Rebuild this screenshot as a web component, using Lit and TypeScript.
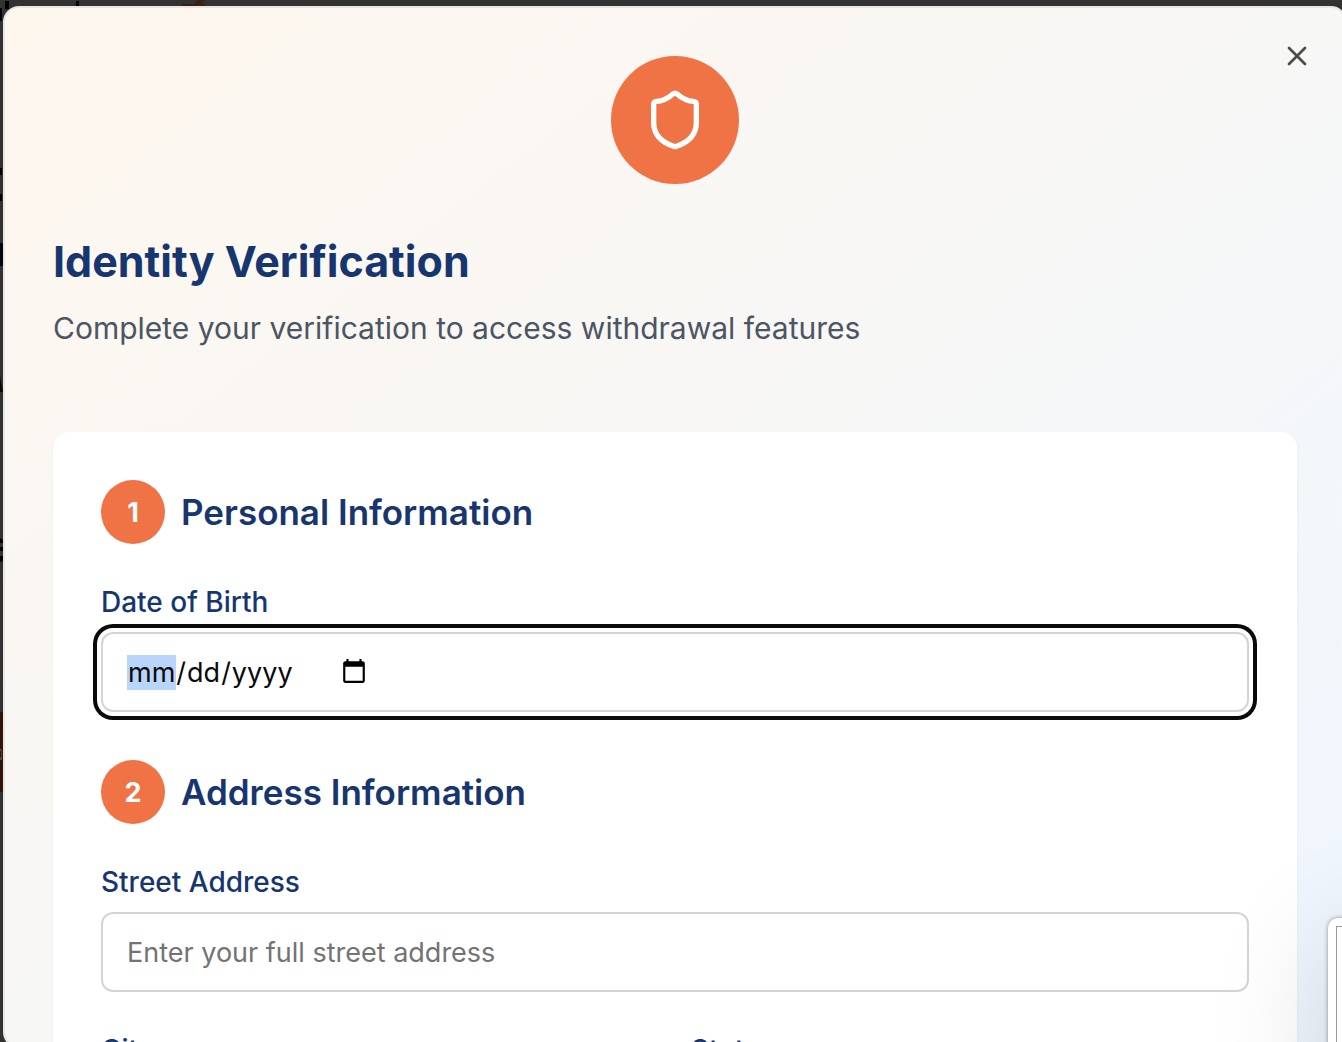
import { LitElement, html, svg, css } from "lit";
import { customElement, property } from "lit/decorators.js";

const shieldIcon = svg`
  <path d="M20 13c0 5-3.5 7.5-7.66 8.95a1 1 0 0 1-.67-.01C7.5 20.5 4 18 4 13V6a1 1 0 0 1 1-1c2 0 4.5-1.2 6.24-2.72a1.17 1.17 0 0 1 1.52 0C14.51 3.81 17 5 19 5a1 1 0 0 1 1 1z"></path>
`;

const closeIcon = svg`<path d="M18 6 6 18"></path><path d="m6 6 12 12"></path>`;

@customElement("step-heading")
export class StepHeading extends LitElement {
  @property({ type: Number }) step = 1;
  @property() heading = "";

  static styles = css`
    :host {
      display: flex;
      align-items: center;
      gap: 16px;
    }
    .badge {
      display: flex;
      flex: none;
      align-items: center;
      justify-content: center;
      width: 64px;
      height: 64px;
      border-radius: 50%;
      background: #f07345;
      color: #fff;
      font-size: 27px;
      font-weight: 700;
    }
    .heading {
      margin: 0;
      color: #17366f;
      font-size: 35px;
      font-weight: 600;
      line-height: 56px;
    }
  `;

  render() {
    return html`
      <span class="badge">${this.step}</span>
      <h3 class="heading">${this.heading}</h3>
    `;
  }
}

@customElement("app-root")
export class AppRoot extends LitElement {
  static styles = css`
    :host {
      display: block;
      position: relative;
      box-sizing: border-box;
      height: 100vh;
      padding: 6px 0 0 3px;
      overflow: hidden;
      background: #323232;
      font-family: Inter, "Liberation Sans", sans-serif;
    }
    .backdrop {
      position: absolute;
      top: 0;
      left: 0;
      width: 210px;
      height: 800px;
    }
    .modal {
      position: relative;
      box-sizing: border-box;
      height: 100vh;
      margin-right: -5px;
      padding: 48px;
      overflow-y: auto;
      scrollbar-width: none;
      border: 2px solid #e9e6e4;
      border-radius: 16px;
      background: linear-gradient(to bottom right, #fff7ed -6%, #f7f7f6 50%, #eff6ff);
    }
    .close {
      position: absolute;
      top: 32px;
      right: 32px;
      width: 32px;
      height: 32px;
      padding: 0;
      border: 0;
      background: none;
      color: #4b4b4b;
      cursor: pointer;
    }
    .icon {
      display: block;
      fill: none;
      stroke: currentColor;
      stroke-width: 2;
      stroke-linecap: round;
      stroke-linejoin: round;
    }
    .emblem {
      display: flex;
      align-items: center;
      justify-content: center;
      width: 128px;
      height: 128px;
      margin: 0 auto 48px;
      border-radius: 50%;
      background: #f07345;
      color: #fff;
    }
    .title {
      margin: 0;
      color: #17366f;
      font-size: 43px;
      font-weight: 700;
      line-height: 58px;
    }
    .subtitle {
      margin: 12px 0 78px;
      color: #4b5563;
      font-size: 30px;
      line-height: 52px;
    }
    .card {
      display: flex;
      flex-direction: column;
      gap: 48px;
      padding: 48px;
      border-radius: 16px;
      background: #fff;
      box-shadow: 0 2px 4px rgba(0, 0, 0, 0.05);
    }
    .section,
    .field {
      display: flex;
      flex-direction: column;
    }
    .section {
      gap: 44px;
    }
    .field {
      gap: 16px;
    }
    .pair {
      display: grid;
      grid-template-columns: 1fr 1fr;
      gap: 32px;
    }
    .label {
      color: #17366f;
      font-size: 28px;
      font-weight: 500;
      line-height: 28px;
    }
    .input {
      display: flex;
      align-items: center;
      box-sizing: border-box;
      width: 100%;
      height: 80px;
      padding: 0 24px;
      border: 2px solid #d1d5db;
      border-radius: 12px;
      outline: none;
      background: #fff;
      color: #0a0a0a;
      font-family: inherit;
      font-size: 27px;
    }
    .input::placeholder {
      color: #737373;
      opacity: 1;
    }
    .input:focus {
      box-shadow: 0 0 0 4px #fff, 0 0 0 8px #0a0a0a;
    }
    .input::-webkit-datetime-edit {
      flex: none;
    }
    .input:focus::-webkit-datetime-edit-month-field {
      background-color: #b9d5fb !important;
      color: #0a0a0a !important;
    }
    .input::-webkit-calendar-picker-indicator {
      width: 28px;
      height: 28px;
      margin-left: 8px;
    }
    .panel {
      position: absolute;
      top: 918px;
      left: 1328px;
      box-sizing: border-box;
      width: 400px;
      height: 400px;
      padding: 8px;
      border-radius: 10px;
      background: #fff;
      box-shadow: 0 0 4px rgba(0, 0, 0, 0.4), 0 20px 120px rgba(0, 0, 0, 0.14);
    }
    .panel-frame {
      height: 100%;
      border: 1px solid #999;
    }
  `;

  firstUpdated() {
    this.renderRoot.querySelector<HTMLInputElement>("#dob")?.focus();
  }

  private field(id: string, label: string, placeholder: string) {
    return html`
      <div class="field">
        <label class="label" for=${id}>${label}</label>
        <input class="input" id=${id} type="text" placeholder=${placeholder} />
      </div>
    `;
  }

  render() {
    return html`
      <svg class="backdrop" viewBox="0 0 210 800" aria-hidden="true">
        <path fill="#000" d="M5 1h4v8H5zM76 1h3v6h-3zM0 8h2v13H0zM0 168h2v7H0zM0 194h2v7H0z"></path>
        <path fill="#04070f" d="M0 243h3v23H0z"></path>
        <path fill="#0b0906" d="M0 376l3 16H0z"></path>
        <path fill="#000" d="M0 538l3 2v3H0zM0 547h3v4H0zM0 556h3v5l-3 1z"></path>
        <path fill="#3a2010" d="M182 4h12l3-4h8l-3 4h3v4h-23z"></path>
        <path fill="#35130a" d="M0 712h3v80H0z"></path>
        <path fill="#514542" d="M0 748l2 2v10H0v-3h1v-6H0z"></path>
      </svg>
      <main class="modal" role="dialog" aria-labelledby="title">
        <button class="close" aria-label="Close">
          <svg class="icon" width="32" height="32" viewBox="0 0 24 24">${closeIcon}</svg>
        </button>
        <div class="emblem">
          <svg class="icon" width="64" height="64" viewBox="0 0 24 24">${shieldIcon}</svg>
        </div>
        <h2 class="title" id="title">Identity Verification</h2>
        <p class="subtitle">Complete your verification to access withdrawal features</p>
        <form class="card">
          <section class="section">
            <step-heading .step=${1} heading="Personal Information"></step-heading>
            <div class="field">
              <label class="label" for="dob">Date of Birth</label>
              <input class="input" id="dob" type="date" />
            </div>
          </section>
          <section class="section">
            <step-heading .step=${2} heading="Address Information"></step-heading>
            ${this.field("street", "Street Address", "Enter your full street address")}
            <div class="pair">
              ${this.field("city", "City", "")} ${this.field("state", "State", "")}
            </div>
          </section>
        </form>
      </main>
      <aside class="panel"><div class="panel-frame"></div></aside>
    `;
  }
}
